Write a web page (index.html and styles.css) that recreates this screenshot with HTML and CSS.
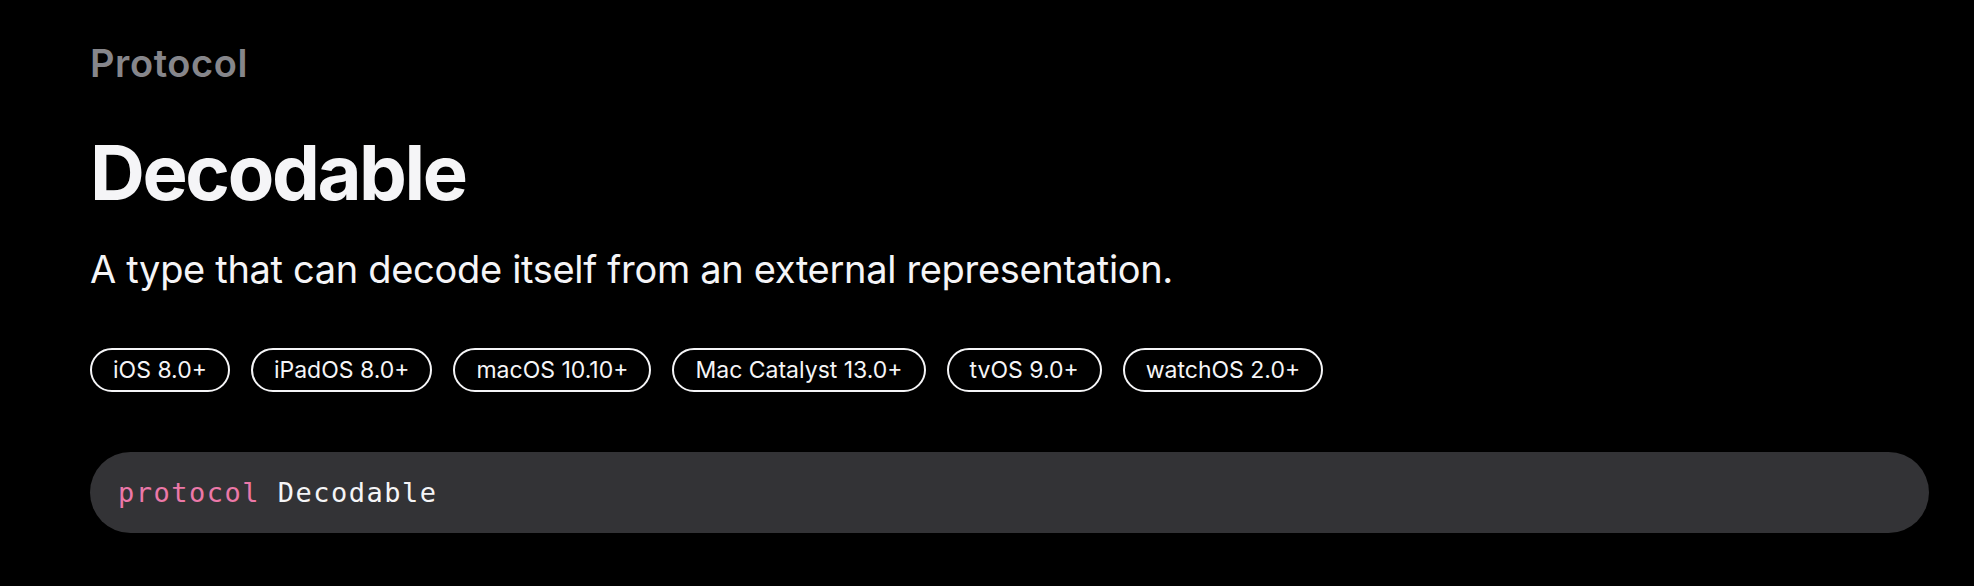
FILE: index.html
```html
<!DOCTYPE html>
<html lang="en">
<head>
<meta charset="utf-8">
<title>Decodable</title>
<link rel="stylesheet" href="styles.css">
</head>
<body>
<main class="topic">
  <div class="eyebrow">Protocol</div>
  <h1 class="title">Decodable</h1>
  <p class="abstract">A type that can decode itself from an external representation.</p>
  <ul class="platforms">
    <li class="pill">iOS 8.0+</li>
    <li class="pill">iPadOS 8.0+</li>
    <li class="pill">macOS 10.10+</li>
    <li class="pill">Mac Catalyst 13.0+</li>
    <li class="pill">tvOS 9.0+</li>
    <li class="pill">watchOS 2.0+</li>
  </ul>
  <pre class="declaration"><code><span class="kw">protocol</span> <span class="type">Decodable</span></code></pre>
</main>
</body>
</html>
```
FILE: styles.css
```css
html, body {
  margin: 0;
  padding: 0;
  background: #000;
}
body {
  font-family: "Inter", "Noto Sans", sans-serif;
  color: #f5f5f7;
}
.topic {
  padding: 40px 45px 0 90px;
  display: flex;
  flex-direction: column;
  align-items: stretch;
}
.eyebrow {
  font-size: 38px;
  line-height: 46px;
  font-weight: 600;
  color: #86868b;
  letter-spacing: 0.6px;
}
.title {
  margin: 40px 0 0 0;
  font-size: 76px;
  line-height: 92px;
  font-weight: 700;
  letter-spacing: -2.4px;
  color: #f5f5f7;
}
.abstract {
  margin: 28px 0 0 0;
  font-size: 38px;
  line-height: 46px;
  font-weight: 400;
  letter-spacing: -0.32px;
  color: #f5f5f7;
}
.platforms {
  list-style: none;
  margin: 56px 0 0 0;
  padding: 0;
  display: flex;
  gap: 21px;
}
.pill {
  height: 40px;
  line-height: 40px;
  padding: 0 21px;
  border: 2px solid #f5f5f7;
  border-radius: 24px;
  font-size: 23px;
  font-weight: 400;
  color: #f5f5f7;
}
.declaration {
  margin: 60px 0 0 0;
  height: 81px;
  box-sizing: border-box;
  padding: 0 28px;
  border-radius: 41px;
  background: #333336;
  display: flex;
  align-items: center;
  font-family: "DejaVu Sans Mono", "Liberation Mono", monospace;
  font-size: 27px;
  letter-spacing: 1.5px;
  color: #f5f5f7;
}
.kw {
  color: #ec78a8;
}
.type {
  color: #f5f5f7;
}
```
